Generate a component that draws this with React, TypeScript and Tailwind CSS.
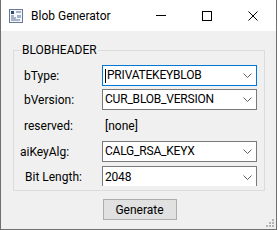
import React from "react";

const font = "font-['Segoe_UI','Roboto','Liberation_Sans',sans-serif]";

function Chevron() {
  return (
    <svg width="9" height="5" viewBox="0 0 9 5" className="shrink-0">
      <path d="M0.5 0.5 L4.5 4.5 L8.5 0.5" fill="none" stroke="#606060" strokeWidth="1" />
    </svg>
  );
}

function Combo({
  value,
  focused,
  clipped,
}: {
  value: string;
  focused?: boolean;
  clipped?: boolean;
}) {
  return (
    <div
      className={
        "flex w-[155px] items-center bg-white pl-[2px] pr-[4px] " +
        (focused ? "h-[21px] border border-[#0078d7] " : "h-[21px] border border-[#7a7a7a] ") +
        (clipped ? "border-b-0" : "")
      }
    >
      {focused && <span className="mr-[1px] h-[14px] w-px bg-black" />}
      <span className="flex-1 truncate leading-[19px] tracking-[-0.2px] text-black">{value}</span>
      <Chevron />
    </div>
  );
}

function Row({ label, children, labelClass }: { label: string; children: React.ReactNode; labelClass?: string }) {
  return (
    <div className="flex items-center">
      <span className={"w-[78px] shrink-0 text-black " + (labelClass ?? "")}>{label}</span>
      {children}
    </div>
  );
}

function AppIcon() {
  return (
    <svg width="14" height="14" viewBox="0 0 14 14">
      <rect x="0.5" y="0.5" width="13" height="13" fill="#f4f6fa" stroke="#6a7a96" />
      <rect x="2" y="2" width="3" height="3" fill="#2b4a7a" />
      <path d="M2 7h3M2 9h5M2 11h9M7 3h5" stroke="#5a6f94" strokeWidth="1" />
      <rect x="8" y="6" width="4" height="3" fill="#9fb3d4" />
    </svg>
  );
}

export default function App() {
  return (
    <div className={"relative flex h-[230px] w-[277px] flex-col border-x border-b border-[#6f6f6f] text-[12px] " + font}>
      {/* title bar */}
      <div className="flex h-[31px] shrink-0 items-center bg-white">
        <div className="ml-[8px] flex items-center">
          <AppIcon />
        </div>
        <span className="ml-[8px] flex-1 text-black">Blob Generator</span>
        <div className="flex h-full">
          <div className="flex w-[46px] items-center justify-center">
            <div className="h-px w-[10px] bg-black" />
          </div>
          <div className="flex w-[46px] items-center justify-center">
            <div className="h-[10px] w-[10px] border border-black" />
          </div>
          <div className="flex w-[46px] items-center justify-center">
            <svg width="10" height="10" viewBox="0 0 10 10">
              <path d="M0.5 0.5 L9.5 9.5 M9.5 0.5 L0.5 9.5" stroke="#000" strokeWidth="1" />
            </svg>
          </div>
        </div>
      </div>

      {/* client */}
      <div className="flex flex-1 flex-col bg-[#f0f0f0] px-[12px] pt-[11px]">
        <fieldset className="border border-[#dcdcdc] pb-[4px] pl-[10px] pr-[7px] pt-[7px]">
          <legend className="-ml-[3px] px-[1px] leading-[16px] text-black">BLOBHEADER</legend>
          <div className="flex flex-col">
            <Row label="bType:">
              <Combo value="PRIVATEKEYBLOB" focused />
            </Row>
            <div className="mt-[3px]">
              <Row label="bVersion:">
                <Combo value="CUR_BLOB_VERSION" />
              </Row>
            </div>
            <div className="flex h-[31px] items-center">
              <span className="w-[78px] shrink-0 text-black">reserved:</span>
              <span className="pl-[3px] text-black">[none]</span>
            </div>
            <Row label="aiKeyAlg:" labelClass="-ml-[4px] mr-[4px]">
              <Combo value="CALG_RSA_KEYX" />
            </Row>
            <div className="mt-[4px] h-[20px] overflow-hidden">
              <Row label="Bit Length:" labelClass="ml-[1px] mr-[-1px]">
                <Combo value="2048" clipped />
              </Row>
            </div>
          </div>
        </fieldset>
        <div className="mt-[8px] flex justify-center pl-[2px]">
          <button className="h-[21px] w-[74px] border border-[#adadad] bg-[#e1e1e1] text-black">
            Generate
          </button>
        </div>
      </div>

      {/* size grip */}
      <svg width="8" height="8" viewBox="0 0 8 8" className="absolute bottom-[2px] right-[2px]">
        <rect x="6" y="0" width="2" height="2" fill="#b5b5b5" />
        <rect x="3" y="3" width="2" height="2" fill="#b5b5b5" />
        <rect x="6" y="3" width="2" height="2" fill="#b5b5b5" />
        <rect x="0" y="6" width="2" height="2" fill="#b5b5b5" />
        <rect x="3" y="6" width="2" height="2" fill="#b5b5b5" />
        <rect x="6" y="6" width="2" height="2" fill="#b5b5b5" />
      </svg>
    </div>
  );
}
